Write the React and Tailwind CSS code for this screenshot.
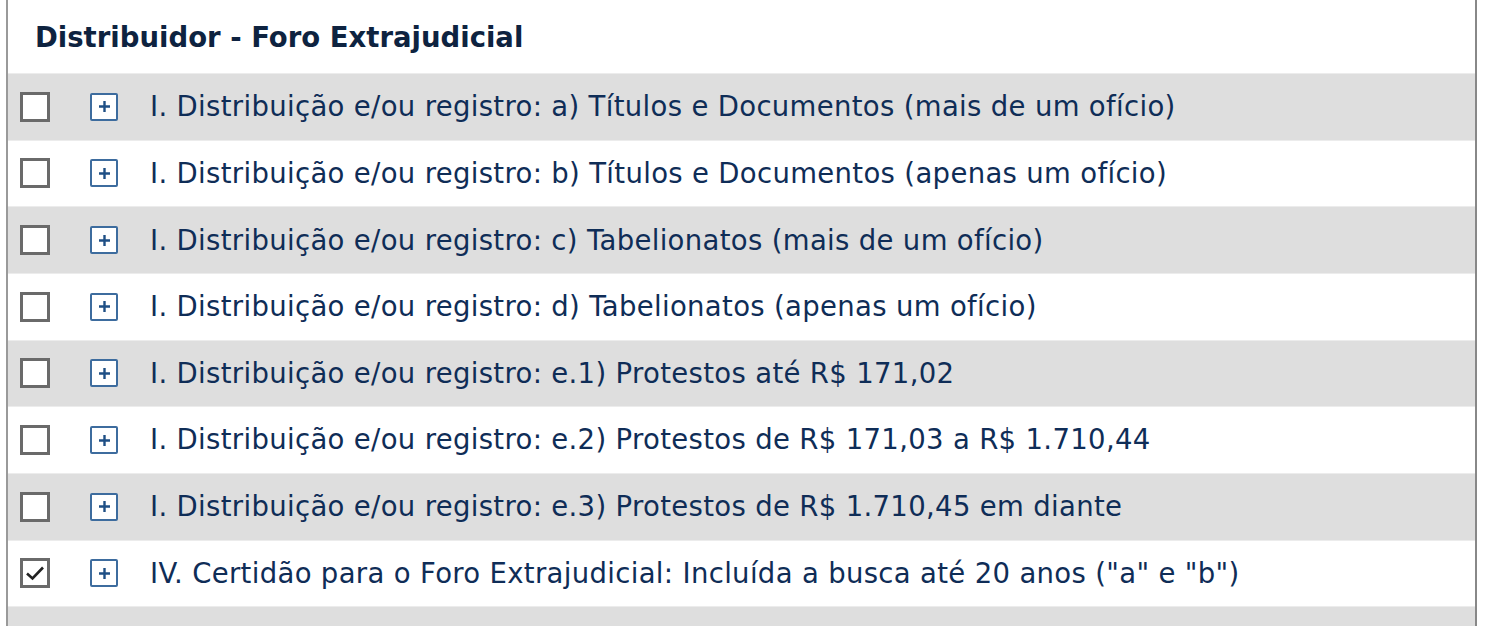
const rows = [
  { label: 'I. Distribuição e/ou registro: a) Títulos e Documentos (mais de um ofício)', checked: false },
  { label: 'I. Distribuição e/ou registro: b) Títulos e Documentos (apenas um ofício)', checked: false },
  { label: 'I. Distribuição e/ou registro: c) Tabelionatos (mais de um ofício)', checked: false },
  { label: 'I. Distribuição e/ou registro: d) Tabelionatos (apenas um ofício)', checked: false },
  { label: 'I. Distribuição e/ou registro: e.1) Protestos até R$ 171,02', checked: false },
  { label: 'I. Distribuição e/ou registro: e.2) Protestos de R$ 171,03 a R$ 1.710,44', checked: false },
  { label: 'I. Distribuição e/ou registro: e.3) Protestos de R$ 1.710,45 em diante', checked: false },
  { label: 'IV. Certidão para o Foro Extrajudicial: Incluída a busca até 20 anos ("a" e "b")', checked: true },
  { label: '', checked: false },
];

function Checkbox({ checked }) {
  return (
    <div className="w-[30px] h-[30px] border-[3px] border-[#6a6a6a] bg-white flex items-center justify-center shrink-0">
      {checked && (
        <svg width="20" height="16" viewBox="0 0 20 16" fill="none">
          <path d="M2 8.5 L7.5 13.5 L18 2.5" stroke="#222" strokeWidth="2.6" />
        </svg>
      )}
    </div>
  );
}

function PlusIcon() {
  return (
    <div className="w-[28px] h-[28px] border-[2.5px] border-[#3d6c9e] rounded-[2px] bg-white flex items-center justify-center shrink-0">
      <svg width="13" height="13" viewBox="0 0 13 13">
        <path d="M6.5 1 V12 M1 6.5 H12" stroke="#1f4f85" strokeWidth="2.4" />
      </svg>
    </div>
  );
}

export default function App() {
  return (
    <div className="w-[1485px] h-[626px] overflow-hidden bg-white font-['DejaVu_Sans',Verdana,sans-serif]">
      <div className="ml-[6px] w-[1471px] h-full border-l-2 border-r-2 border-l-[#9a9a9a] border-r-[#888]">
        <div className="h-[73px] flex items-center pl-[27px] pt-[3px]">
          <h2 className="text-[27.5px] font-bold text-[#0e2340]">
            Distribuidor - Foro Extrajudicial
          </h2>
        </div>
        {rows.map((row, i) => (
          <div
            key={i}
            className={`h-[66.67px] flex items-center border-t border-[#ececec] ${
              i % 2 === 0 ? 'bg-[#dedede]' : 'bg-white'
            }`}
          >
            {row.label && (
              <>
                <div className="pl-[12px] w-[82px] flex">
                  <Checkbox checked={row.checked} />
                </div>
                <PlusIcon />
                <span className="pl-[32px] text-[27.5px] tracking-[0.33px] text-[#0f2d57] whitespace-nowrap">
                  {row.label}
                </span>
              </>
            )}
          </div>
        ))}
      </div>
    </div>
  );
}
